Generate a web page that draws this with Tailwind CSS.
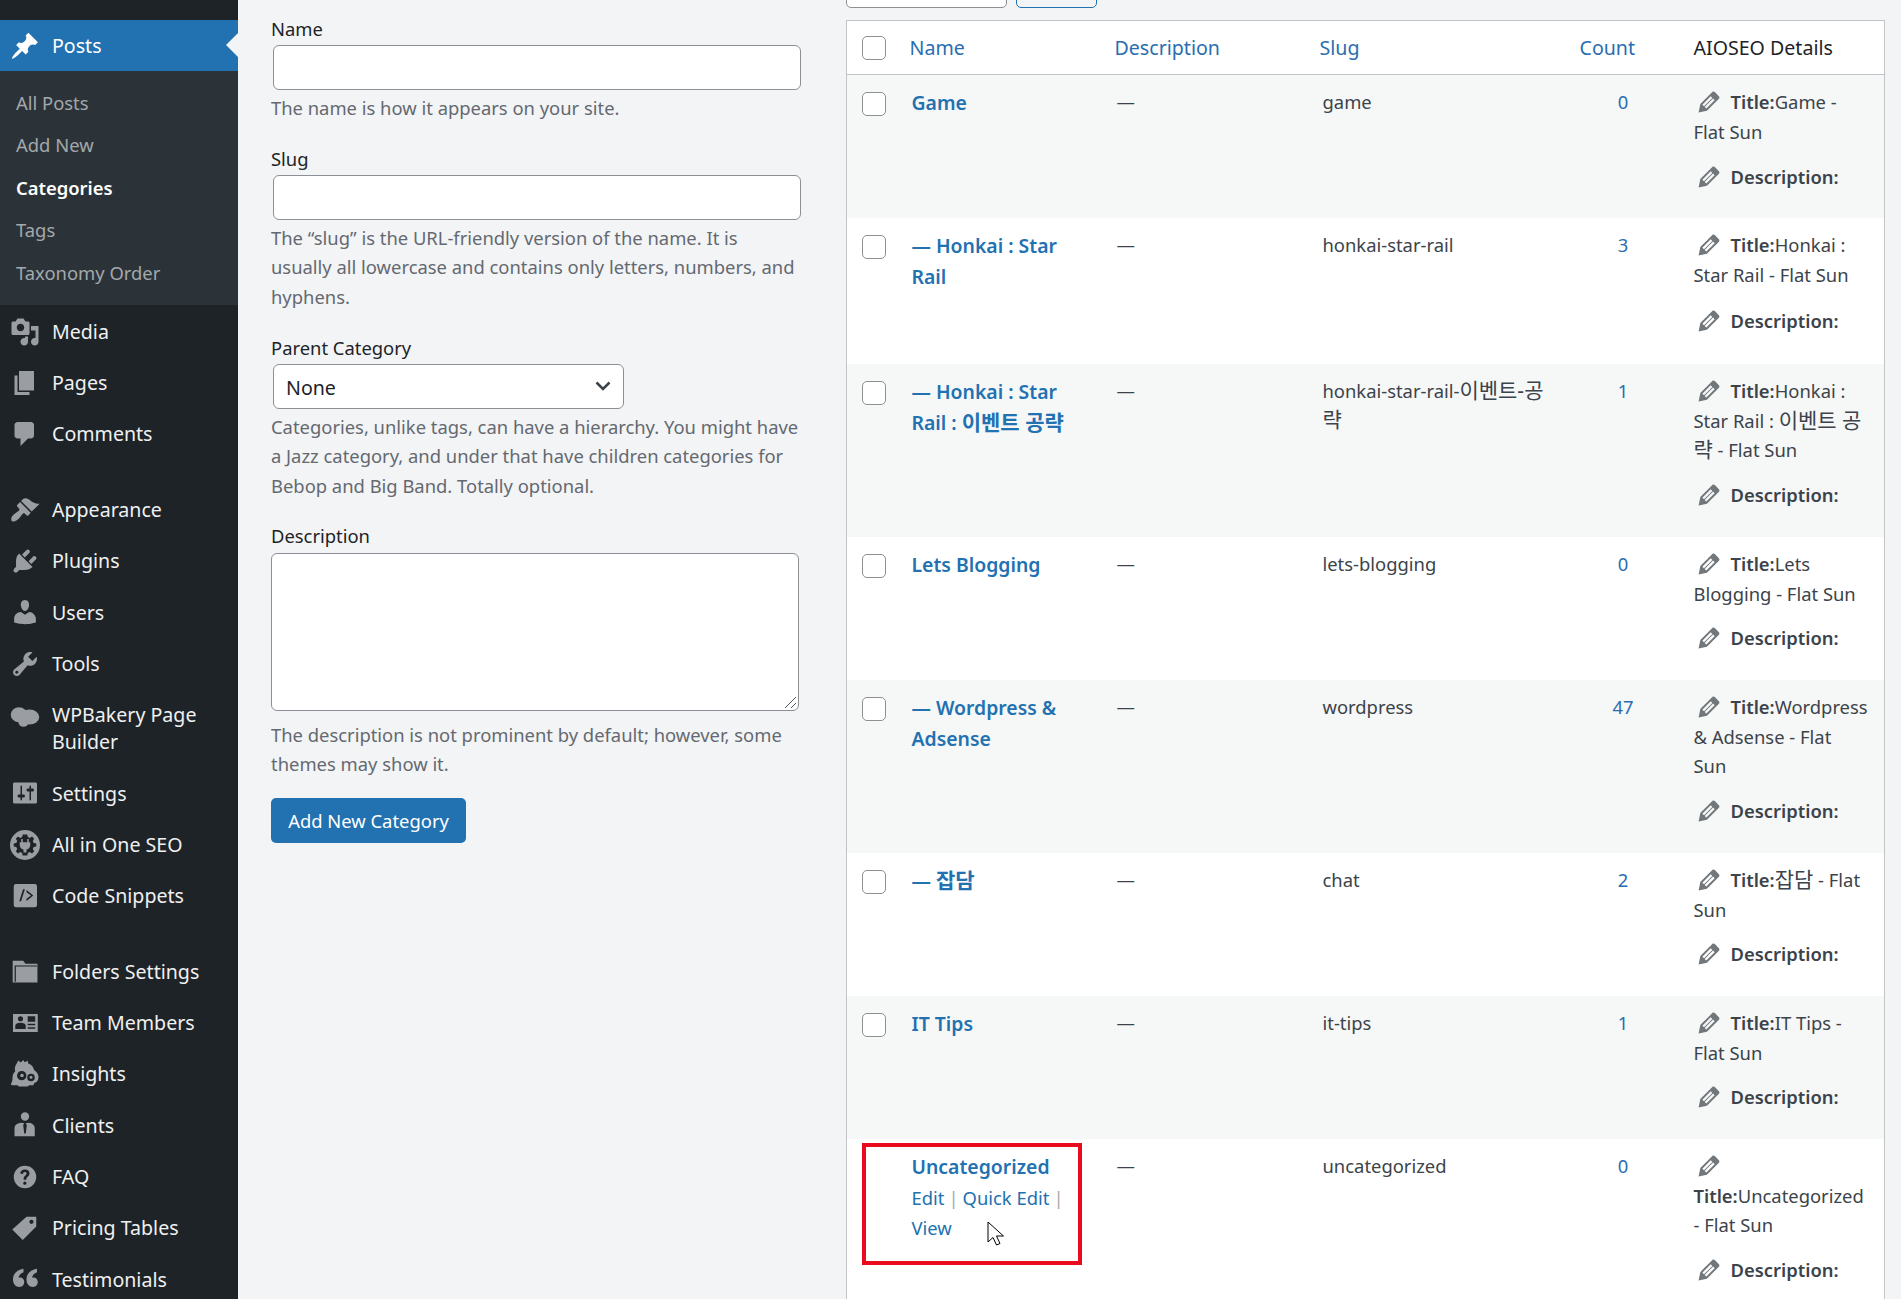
<!DOCTYPE html>
<html>
<head>
  <meta charset="UTF-8">
  <script src="https://cdn.jsdelivr.net/npm/@tailwindcss/browser@4"></script>
</head>
<body class="bg-[#f3f4f6] h-[1299px] overflow-hidden font-['Noto_Sans','Noto_Sans_CJK_KR',sans-serif] text-[18.4px] text-[#3c434a]">
<svg class="hidden"><symbol id="pencil" viewBox="0 0 20 20"><path d="M13.89 3.39l2.71 2.72c.46.46.42 1.24.03 1.64l-8.01 8.02-5.56 1.16 1.16-5.58s7.6-7.63 7.99-8.03c.39-.39 1.22-.39 1.68.07zm-2.73 2.79l-5.59 5.61 1.11 1.11 5.54-5.65zm-2.97 8.23l5.58-5.6-1.07-1.08-5.59 5.6z"/></symbol></svg>
<div class="flex h-[1299px] overflow-hidden">

  <!-- admin menu -->
  <nav class="w-[238px] shrink-0 bg-[#1d2327] text-[19.6px] text-[#f0f0f1] pt-[20px]">
    <a class="relative flex items-center h-[51px] bg-[#2271b1] text-white">
      <svg class="w-[30px] h-[30px] ml-[10px] mr-[12px] fill-white" viewBox="0 0 20 20"><path d="M10.44 3.02l1.82-1.82 6.36 6.35-1.83 1.82c-1.05-.68-2.48-.57-3.41.36l-.75.75c-.92.93-1.04 2.35-.35 3.41l-1.83 1.82-2.41-2.41-2.8 2.79c-.42.42-3.38 2.71-3.8 2.29s1.86-3.39 2.28-3.81l2.79-2.79L4.1 9.36l1.83-1.82c1.05.69 2.48.57 3.4-.36l.75-.75c.93-.92 1.05-2.35.36-3.41z"/></svg>
      Posts
      <span class="absolute right-0 top-[13px] border-y-[12px] border-r-[12px] border-y-transparent border-r-[#f3f4f6]"></span>
    </a>
    <div class="bg-[#2c3338] h-[234px] pt-[11px] text-[18.4px] text-[#a3a8ac] pl-[16px]">
      <div class="h-[42.4px] leading-[42.4px]">All Posts</div>
      <div class="h-[42.4px] leading-[42.4px]">Add New</div>
      <div class="h-[42.4px] leading-[42.4px] font-semibold text-white">Categories</div>
      <div class="h-[42.4px] leading-[42.4px]">Tags</div>
      <div class="h-[42.4px] leading-[42.4px]">Taxonomy Order</div>
    </div>

    <a class="flex items-center h-[51.25px] mt-[1px]"><svg class="w-[30px] h-[30px] ml-[10px] mr-[12px] fill-[#9a9ea2]" viewBox="0 0 20 20"><path d="M13 11V4c0-.55-.45-1-1-1h-1.67L9 1H5L3.67 3H2c-.55 0-1 .45-1 1v7c0 .55.45 1 1 1h10c.55 0 1-.45 1-1zM7 4.5c1.38 0 2.5 1.12 2.5 2.5S8.38 9.5 7 9.5 4.5 8.38 4.5 7 5.62 4.5 7 4.5zM14 6h5v10.5c0 1.38-1.12 2.5-2.5 2.5S14 17.88 14 16.5s1.12-2.5 2.5-2.5c.17 0 .34.02.5.05V9h-3V6zm-4 8.05V13h2v3.5c0 1.38-1.12 2.5-2.5 2.5S7 17.88 7 16.5 8.12 14 9.5 14c.17 0 .34.02.5.05z"/></svg>Media</a>
    <a class="flex items-center h-[51.25px]"><svg class="w-[30px] h-[30px] ml-[10px] mr-[12px] fill-[#9a9ea2]" viewBox="0 0 20 20"><path d="M6 15V2h10v13H6zm-1 1h8v2H3V5h2v11z"/></svg>Pages</a>
    <a class="flex items-center h-[51.25px]"><svg class="w-[30px] h-[30px] ml-[10px] mr-[12px] fill-[#9a9ea2]" viewBox="0 0 20 20"><path d="M5 2h9c1.1 0 2 .9 2 2v7c0 1.1-.9 2-2 2h-2l-5 5v-5H5c-1.1 0-2-.9-2-2V4c0-1.1.9-2 2-2z"/></svg>Comments</a>
    <div class="h-[24.5px]"></div>
    <a class="flex items-center h-[51.25px]"><svg class="w-[30px] h-[30px] ml-[10px] mr-[12px] fill-[#9a9ea2]" viewBox="0 0 20 20"><path d="M14.48 11.06L7.41 3.99l1.5-1.5c.5-.56 2.3-.47 3.51.32 1.21.8 1.43 1.28 2.91 2.1 1.18.64 2.45 1.26 4.45.85zm-.71.71L6.7 4.7 4.93 6.47c-.39.39-.39 1.02 0 1.41l1.06 1.06c.39.39.39 1.03 0 1.42-.6.6-1.43 1.11-2.21 1.69-.35.26-.7.53-1.01.84C1.43 13.71.05 16.12 1.2 17.27c1.15 1.15 3.55-.22 4.8-1.58.3-.31.58-.66.84-1.01.58-.78 1.09-1.61 1.69-2.21.39-.39 1.02-.39 1.41 0l1.06 1.06c.39.39 1.02.39 1.41 0z"/></svg>Appearance</a>
    <a class="flex items-center h-[51.25px]"><svg class="w-[30px] h-[30px] ml-[10px] mr-[12px] fill-[#9a9ea2]" viewBox="0 0 20 20"><path d="M13.11 4.36L9.87 7.6 8 5.73l3.24-3.24c.35-.34 1.05-.2 1.56.32.52.51.66 1.21.31 1.55zm-8 1.77l.91-1.12 9.01 9.01-1.19.84c-.71.71-2.63 1.16-3.82 1.16H6.14L4.9 17.26c-.59.59-1.54.59-2.12 0-.59-.58-.59-1.53 0-2.12l1.24-1.24v-3.88c0-1.13.4-3.19 1.09-3.89zm7.26 3.97l3.24-3.24c.34-.35 1.04-.21 1.55.31.52.51.66 1.21.31 1.55l-3.24 3.25z"/></svg>Plugins</a>
    <a class="flex items-center h-[51.25px]"><svg class="w-[30px] h-[30px] ml-[10px] mr-[12px] fill-[#9a9ea2]" viewBox="0 0 20 20"><path d="M10 9.25c-2.27 0-2.73-3.44-2.73-3.44C7 4.02 7.82 2 9.97 2c2.16 0 2.98 2.02 2.71 3.81 0 0-.41 3.44-2.68 3.44zm0 2.57L12.72 10c2.39 0 4.52 2.33 4.52 4.53v2.49s-3.65 1.13-7.24 1.13c-3.65 0-7.24-1.13-7.24-1.13v-2.49c0-2.25 1.94-4.48 4.47-4.48z"/></svg>Users</a>
    <a class="flex items-center h-[51.25px]"><svg class="w-[30px] h-[30px] ml-[10px] mr-[12px] fill-[#9a9ea2]" viewBox="0 0 20 20"><path d="M16.68 9.77c-1.34 1.34-3.3 1.67-4.95.99l-5.41 6.52c-.99.99-2.59.99-3.58 0s-.99-2.59 0-3.57l6.52-5.42c-.68-1.65-.35-3.61.99-4.95 1.28-1.28 3.12-1.62 4.72-1.06l-2.89 2.89 2.82 2.82 2.86-2.87c.53 1.58.18 3.39-1.08 4.65zM3.81 16.21c.4.39 1.04.39 1.43 0 .4-.4.4-1.04 0-1.43-.39-.4-1.03-.4-1.43 0-.39.39-.39 1.03 0 1.43z"/></svg>Tools</a>
    <a class="flex items-center h-[78.5px]"><svg class="w-[30px] h-[30px] ml-[10px] mr-[12px] -mt-[24px] shrink-0 fill-[#9a9ea2]" viewBox="0 0 20 20"><ellipse cx="6" cy="8.5" rx="5.5" ry="5"/><ellipse cx="13" cy="10" rx="6.5" ry="5"/><ellipse cx="9" cy="13" rx="3.5" ry="3.5"/></svg><span class="leading-[27px] w-[170px] -mt-[1px]">WPBakery Page Builder</span></a>
    <a class="flex items-center h-[51.25px]"><svg class="w-[30px] h-[30px] ml-[10px] mr-[12px] fill-[#9a9ea2]" viewBox="0 0 20 20"><path d="M18 16V4c0-.55-.45-1-1-1H3c-.55 0-1 .45-1 1v12c0 .55.45 1 1 1h14c.55 0 1-.45 1-1zM8 11h1c.55 0 1 .45 1 1s-.45 1-1 1H8v1.5c0 .28-.22.5-.5.5s-.5-.22-.5-.5V13H6c-.55 0-1-.45-1-1s.45-1 1-1h1V5.5c0-.28.22-.5.5-.5s.5.22.5.5V11zm5-2h-1c-.55 0-1-.45-1-1s.45-1 1-1h1V5.5c0-.28.22-.5.5-.5s.5.22.5.5V7h1c.55 0 1 .45 1 1s-.45 1-1 1h-1v5.5c0 .28-.22.5-.5.5s-.5-.22-.5-.5V9z"/></svg>Settings</a>
    <a class="flex items-center h-[51.25px]"><svg class="w-[30px] h-[30px] ml-[10px] mr-[12px] fill-[#9a9ea2]" viewBox="0 0 20 20"><circle cx="10" cy="10" r="10"/><path class="fill-[#1d2327]" d="M8.5 3l-.4 1.7-1.3.6-1.5-.9-1.4 1.4.9 1.5-.6 1.3-1.7.4v2l1.7.4.6 1.3-.9 1.5 1.4 1.4 1.5-.9 1.3.6.4 1.7h3l.4-1.7 1.3-.6 1.5.9 1.4-1.4-.9-1.5.6-1.3 1.7-.4v-2l-1.7-.4-.6-1.3.9-1.5-1.4-1.4-1.5.9-1.3-.6-.4-1.7z"/><path d="M7.5 6h1v2.2h3V6h1v2.2h1V10c0 1.500-1 2.800-2.500 3v2h-2v-2c-1.500-.2-2.500-1.500-2.500-3V8.200h1z"/></svg>All in One SEO</a>
    <a class="flex items-center h-[51.25px]"><svg class="w-[30px] h-[30px] ml-[10px] mr-[12px] fill-[#9a9ea2]" viewBox="0 0 20 20"><path fill-rule="evenodd" d="M4 2h12.500A1.500 1.500 0 0 1 18 3.500V16a1.500 1.500 0 0 1-1.500 1.500H4A1.500 1.500 0 0 1 2.500 16V3.500A1.500 1.500 0 0 1 4 2zM8.700 5.500l-2.500 8h1.200l2.500-8zM11 6v1.500l3 2.200-3 2.200v1.500l4.500-3.700z"/></svg>Code Snippets</a>
    <div class="h-[24.5px]"></div>
    <a class="flex items-center h-[51.25px]"><svg class="w-[30px] h-[30px] ml-[10px] mr-[12px] fill-[#9a9ea2]" viewBox="0 0 20 20"><path d="M1.800 2.500h7l1.500 2h8v12.500H1.800z"/><path class="stroke-[#1d2327] fill-none" stroke-width=".8" d="M3.500 16.500V6h14.500"/></svg>Folders Settings</a>
    <a class="flex items-center h-[51.25px]"><svg class="w-[30px] h-[30px] ml-[10px] mr-[12px] fill-[#9a9ea2]" viewBox="0 0 20 20"><path fill-rule="evenodd" d="M2 4h16.500v12H2zM7 5.500a1.700 1.700 0 1 0 0 3.400a1.700 1.700 0 1 0 0-3.400zM3.500 14h7v-2.200c0-1-1.500-1.900-3.500-1.900s-3.500.9-3.500 1.900zM11.800 5.500v3.700h5V5.500zM11.800 10.500v1h5v-1zM11.800 12.800v1h5v-1z"/></svg>Team Members</a>
    <a class="flex items-center h-[51.25px]"><svg class="w-[30px] h-[30px] ml-[10px] mr-[12px] fill-[#9a9ea2]" viewBox="0 0 20 20"><path fill-rule="evenodd" d="M5.500 1l1.700 1.300L8.800.6l1 1.500 1.900-.9.500 1.800c2 .6 3.400 2.100 3.800 4.300 1.400.8 3 2.700 3 4.700 0 1.800-.9 3.700-2.900 4l-.5 1.500H12.800l-1 .9H6l-1-.9H1.700L.5 17c.9-1.500 1.200-3 1.200-4.800 0-1.700.8-3 1.800-4-.5-1.500-.3-3.600.9-5.100zM7.800 8a3.100 3.100 0 1 0 0 6.200a3.100 3.100 0 1 0 0-6.200zM14 9.800a2.500 2.500 0 1 0 0 5a2.500 2.500 0 1 0 0-5zM8 9.800a1.200 1.200 0 1 1 0 2.400a1.200 1.200 0 1 1 0-2.400zM14 11.200a1 1 0 1 1 0 2a1 1 0 1 1 0-2z"/></svg>Insights</a>
    <a class="flex items-center h-[51.25px]"><svg class="w-[30px] h-[30px] ml-[10px] mr-[12px] fill-[#9a9ea2]" viewBox="0 0 20 20"><path fill-rule="evenodd" d="M10 1.500a2.800 2.800 0 1 1 0 5.600a2.800 2.800 0 1 1 0-5.600zM7.500 8.500l2 .3-.7 1.400.7 5.500h1l.7-5.500-.7-1.400 2-.3c2.200.3 4 1.500 4 3.500v5.500H3V12c0-2 2.300-3.300 4.500-3.500z"/></svg>Clients</a>
    <a class="flex items-center h-[51.25px]"><svg class="w-[30px] h-[30px] ml-[10px] mr-[12px] fill-[#9a9ea2]" viewBox="0 0 20 20"><path fill-rule="evenodd" d="M10 2.500a7.500 7.500 0 1 1 0 15a7.500 7.500 0 1 1 0-15zM10 5c-1.800 0-3 1-3.200 2.700l1.800.3c.1-.8.600-1.300 1.300-1.300s1.200.4 1.200 1c0 1.100-2 1.500-2 3.600v.5h1.800v-.4c0-1.400 2.100-1.800 2.100-3.900C13 6 11.800 5 10 5zM9.900 13a1.100 1.100 0 1 0 0 2.200a1.100 1.100 0 1 0 0-2.200z"/></svg>FAQ</a>
    <a class="flex items-center h-[51.25px]"><svg class="w-[30px] h-[30px] ml-[10px] mr-[12px] fill-[#9a9ea2]" viewBox="0 0 20 20"><path fill-rule="evenodd" d="M11 2.500h6.500V9l-9 9-7-7zM14.300 4.500a1.400 1.400 0 1 0 0 2.800a1.400 1.400 0 1 0 0-2.800z"/></svg>Pricing Tables</a>
    <a class="flex items-center h-[51.25px] mt-[1px]"><svg class="w-[30px] h-[30px] ml-[10px] mr-[12px] fill-[#9a9ea2]" viewBox="0 0 20 20"><path d="M9 2.500v2.300c-2 .6-3 2-3.300 3.700.3-.1.700-.2 1.100-.2 1.500 0 2.700 1.300 2.700 3.100 0 1.900-1.300 3.300-3.200 3.300-2.600 0-4.300-2.200-4.300-5 0-3.800 2.700-6.600 7-7.200zm9 0v2.300c-2 .6-3 2-3.300 3.700.3-.1.700-.2 1.100-.2 1.500 0 2.700 1.300 2.700 3.100 0 1.900-1.300 3.300-3.200 3.300-2.600 0-4.300-2.200-4.300-5 0-3.800 2.700-6.600 7-7.200z"/></svg>Testimonials</a>
  </nav>

  <!-- add category form -->
  <form class="w-[608px] shrink-0 pl-[33px] leading-[29.5px] text-[#646970]">
    <label class="block text-[#1d2327] mt-[14px]">Name</label>
    <div class="h-[45px] w-[528px] ml-[2px] mt-[1px] bg-white border border-[#8c8f94] rounded-[6px]"></div>
    <p class="mt-[3px] w-[531px]">The name is how it appears on your site.</p>
    <label class="block text-[#1d2327] mt-[22px]">Slug</label>
    <div class="h-[45px] w-[528px] ml-[2px] mt-[1px] bg-white border border-[#8c8f94] rounded-[6px]"></div>
    <p class="mt-[3px] w-[531px]">The “slug” is the URL-friendly version of the name. It is usually all lowercase and contains only letters, numbers, and hyphens.</p>
    <label class="block text-[#1d2327] mt-[22px]">Parent Category</label>
    <div class="relative h-[45px] w-[351px] ml-[2px] mt-[1px] bg-white border border-[#8c8f94] rounded-[6px] text-[#1d2327] text-[19.6px] pl-[12px] leading-[46px]">None
      <svg class="absolute right-[10px] top-[11px] w-[20px] h-[20px] fill-none stroke-[#3c434a] stroke-[2.5]" viewBox="0 0 20 20"><path d="M3.500 6.500l6.500 6.500 6.500-6.500"/></svg>
    </div>
    <p class="mt-[3px] w-[531px]">Categories, unlike tags, can have a hierarchy. You might have a Jazz category, and under that have children categories for Bebop and Big Band. Totally optional.</p>
    <label class="block text-[#1d2327] mt-[21px]">Description</label>
    <div class="relative h-[158px] w-[528px] mt-[2px] bg-white border border-[#8c8f94] rounded-[6px]">
      <svg class="absolute right-[1px] bottom-[1px] w-[14px] h-[14px] stroke-[#555] fill-none" viewBox="0 0 14 14"><path d="M2 13L13 2M8 13l5-5"/></svg>
    </div>
    <p class="mt-[9px] w-[531px]">The description is not prominent by default; however, some themes may show it.</p>
    <button type="button" class="mt-[19px] w-[195px] h-[45px] pt-[1px] bg-[#2271b1] rounded-[5px] text-white text-center">Add New Category</button>
  </form>

  <!-- category list -->
  <main class="relative w-[1039px] shrink-0">
    <div class="flex gap-[9px] -mt-[30px] h-[50px]">
      <div class="w-[161px] h-[38px] bg-white border border-[#8c8f94] rounded-[5px]"></div>
      <div class="w-[81px] h-[38px] border border-[#2271b1] rounded-[5px]"></div>
    </div>
    <table class="table-fixed w-[1039px] border border-[#c3c4c7] bg-white border-collapse">
      <colgroup><col class="w-[54px]"><col class="w-[205px]"><col class="w-[205px]"><col class="w-[253px]"><col class="w-[111px]"><col></colgroup>
      <thead>
        <tr class="h-[54px] border-b border-[#c3c4c7] text-left text-[19.6px] text-[#2a6db0]">
          <th class="font-normal pl-[15px]"><div class="w-[24px] h-[24px] bg-white border border-[#8c8f94] rounded-[5px]"></div></th>
          <th class="font-normal pl-[9px] pt-[1px]">Name</th>
          <th class="font-normal pl-[9px] pt-[1px]">Description</th>
          <th class="font-normal pl-[9px] pt-[1px]">Slug</th>
          <th class="font-normal pl-[16px] pt-[1px]">Count</th>
          <th class="font-normal pl-[19px] pt-[1px] text-[#1d2327]">AIOSEO Details</th>
        </tr>
      </thead>
      <tbody id="rows" class="align-top leading-[29.5px]"></tbody>
    </table>

    <!-- annotation over the last row -->
    <div class="absolute left-[16px] top-[1143px] w-[220px] h-[122px] border-[4px] border-[#ea0b1d]"></div>
    <svg class="absolute left-[141px] top-[1221px] w-[20px] h-[26px] fill-white stroke-black" viewBox="0 0 20 26"><path d="M1 1v20l5-4.500 3.500 7.500 3.500-1.500-3.500-7.500h7z"/></svg>
  </main>
</div>

<script>
  // korean runs are set larger, Noto CJK looks small next to the latin text
  const ko = s => `<span class="text-[21px]">${s}</span>`;

  const categories = [
    { name: 'Game', slug: 'game', count: 0, title: 'Game - Flat Sun', h: 'h-[143px]', gap: 'mt-[15px]' },
    { name: '— Honkai : Star Rail', slug: 'honkai-star-rail', count: 3, title: 'Honkai : Star Rail - Flat Sun', h: 'h-[146px]', gap: 'mt-[17px]' },
    { name: `— Honkai : Star Rail : ${ko('이벤트 공략')}`, slug: `honkai-star-rail-${ko('이벤트-공략')}`, count: 1, title: `Honkai : Star Rail : ${ko('이벤트 공략')} - Flat Sun`, h: 'h-[173px]', gap: 'mt-[15px]' },
    { name: 'Lets Blogging', slug: 'lets-blogging', count: 0, title: 'Lets Blogging - Flat Sun', h: 'h-[143px]', gap: 'mt-[15px]' },
    { name: '— Wordpress &amp; Adsense', slug: 'wordpress', count: 47, title: 'Wordpress &amp; Adsense - Flat<br>Sun', h: 'h-[173px]', gap: 'mt-[15px]' },
    { name: `— ${ko('잡담')}`, slug: 'chat', count: 2, title: `${ko('잡담')} - Flat Sun`, h: 'h-[143px]', gap: 'mt-[15px]' },
    { name: 'IT Tips', slug: 'it-tips', count: 1, title: 'IT Tips - Flat Sun', h: 'h-[143px]', gap: 'mt-[15px]' },
    { name: 'Uncategorized', slug: 'uncategorized', count: 0, title: 'Uncategorized - Flat Sun', h: 'h-[170px]', gap: 'mt-[15px]', actions: true }
  ];

  const pencil = '<svg class="inline-block w-[30px] h-[30px] -mt-[4px] mr-[7px] fill-[#72777c]"><use href="#pencil"/></svg>';
  const rows = document.getElementById('rows');

  categories.forEach((cat, i) => {
    const tr = document.createElement('tr');
    tr.className = cat.h + (i % 2 == 0 ? ' bg-[#f6f7f7]' : ' bg-white');
    tr.innerHTML = `
      <td class="pl-[15px] pt-[17px]">${cat.actions ? '' : '<div class="w-[24px] h-[24px] bg-white border border-[#8c8f94] rounded-[5px]"></div>'}</td>
      <td class="pl-[11px] pr-[20px] pt-[12px] text-[#2271b1] text-[19.4px] leading-[31px]">
        <span class="font-semibold">${cat.name}</span>
        ${cat.actions ? '<div class="text-[18.4px] leading-[30px] mt-[1px]">Edit<span class="text-[#a7aaad] mx-[4px]">|</span>Quick Edit<span class="text-[#a7aaad] ml-[4px]">|</span> View</div>' : ''}
      </td>
      <td class="pl-[11px] pt-[12px]">—</td>
      <td class="pl-[12px] pr-[10px] pt-[12px] break-all">${cat.slug}</td>
      <td class="pl-[8px] pt-[12px] text-center text-[#2a6db0]">${cat.count}</td>
      <td class="pl-[19px] pr-[14px] pt-[12px]">
        <div>${pencil}<b class="font-semibold">Title:</b>${cat.title}</div>
        <div class="${cat.gap}">${pencil}<b class="font-semibold">Description:</b></div>
      </td>`;
    rows.appendChild(tr);
  });
</script>
</body>
</html>
